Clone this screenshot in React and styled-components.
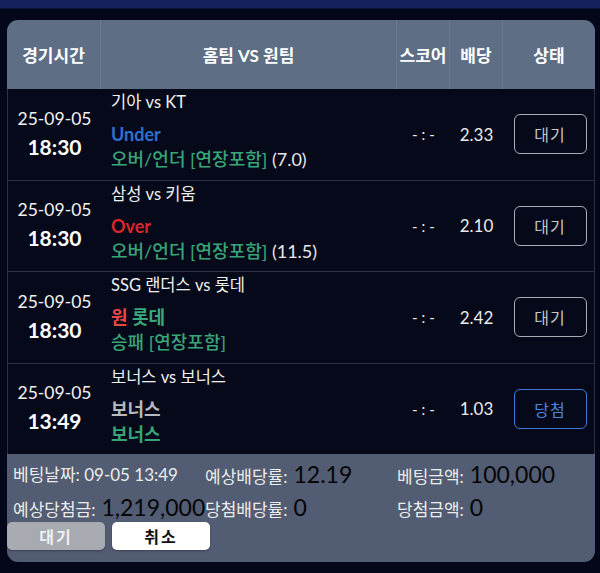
import styled, { createGlobalStyle } from "styled-components";

const GlobalStyle = createGlobalStyle`
  html, body {
    margin: 0;
    padding: 0;
    background: #04061a;
    font-family: Lato, "Noto Sans CJK KR", sans-serif;
  }
`;

const COLS = "93px 296px 53px 53px 93px";

const Page = styled.div`
  width: 600px;
  height: 573px;
  background: #04061a;
  overflow: hidden;
`;

const TopBar = styled.div`
  height: 8px;
  background: #15215c;
  border-bottom: 1px solid #0b1238;
`;

const Card = styled.div`
  margin: 11px 0 0 7px;
  width: 588px;
  border-radius: 11px;
  overflow: hidden;
`;

const HeadRow = styled.div`
  display: grid;
  grid-template-columns: ${COLS};
  height: 69px;
  background: #5e6e85;
`;

const HeadCell = styled.div`
  display: flex;
  align-items: center;
  justify-content: center;
  color: #ffffff;
  font-weight: 700;
  font-size: 17px;
  border-left: ${(p) => (p.first ? "none" : "1px solid #6a7a90")};
`;

const Row = styled.div`
  display: grid;
  grid-template-columns: ${COLS};
  height: 90.5px;
  background: #060919;
  border-top: ${(p) => (p.first ? "none" : "1px solid #2c3146")};
  border-left: 1px solid #2c3146;
  border-right: 1px solid #2c3146;
`;

const TimeCell = styled.div`
  display: flex;
  flex-direction: column;
  align-items: center;
  justify-content: center;
  gap: 3px;
  color: #f2f2f2;
`;

const DateText = styled.div`
  font-size: 17.5px;
  line-height: 24px;
  margin-top: -2px;
`;

const ClockText = styled.div`
  font-size: 21px;
  font-weight: 700;
  line-height: 26px;
  color: #ffffff;
`;

const MatchCell = styled.div`
  display: flex;
  flex-direction: column;
  padding: 1px 0 0 10px;
`;

const Teams = styled.div`
  font-size: 16.5px;
  line-height: 24px;
  color: #f0f0f0;
`;

const Pick = styled.div`
  margin-top: 7px;
  font-size: 18px;
  line-height: 26px;
  font-weight: 700;
  color: ${(p) => p.color || "#3aa97c"};
`;

const Market = styled.div`
  font-size: 18px;
  line-height: 24px;
  font-weight: ${(p) => (p.bold ? 700 : 500)};
  color: #36a678;
`;

const Plain = styled.span`
  color: #e8e8e8;
  font-weight: 400;
`;

const Red = styled.span`
  color: #e8474a;
`;

const Centered = styled.div`
  display: flex;
  align-items: center;
  justify-content: center;
  color: #ececec;
  font-size: ${(p) => p.size || 16}px;
`;

const Score = styled.span`
  letter-spacing: 4px;
  margin-right: -4px;
`;

const StatusBtn = styled.div`
  width: 71px;
  height: 38px;
  border-radius: 6px;
  border: 1px solid ${(p) => (p.win ? "#3b7ad6" : "#a9acb4")};
  color: ${(p) => (p.win ? "#4a88e0" : "#c4c6cc")};
  display: flex;
  align-items: center;
  justify-content: center;
  font-size: 16px;
  letter-spacing: 1px;
`;

const StatusCell = styled.div`
  display: flex;
  align-items: center;
  justify-content: center;
  padding-left: 1px;
`;

const Footer = styled.div`
  background: #525c72;
  padding: 3px 0 12px 0;
`;

const InfoGrid = styled.div`
  display: grid;
  grid-template-columns: 192px 192px 1fr;
  grid-auto-rows: 33px;
  align-items: center;
  padding-left: 6px;
`;

const Info = styled.div`
  display: flex;
  align-items: baseline;
  white-space: nowrap;
  font-size: 17px;
  color: #ececec;
`;

const Value = styled.span`
  margin-left: 6px;
  font-size: 23px;
  color: #050506;
`;

const Buttons = styled.div`
  display: flex;
  gap: 7px;
  margin-top: -1px;
`;

const FootBtn = styled.div`
  width: 98px;
  height: 28px;
  border-radius: 5px;
  background: ${(p) => (p.light ? "#ffffff" : "#a7aab1")};
  color: ${(p) => (p.light ? "#111111" : "#eef0f3")};
  display: flex;
  align-items: center;
  justify-content: center;
  font-size: 16px;
  font-weight: 700;
  letter-spacing: 2px;
  box-shadow: 0 1px 2px rgba(0, 0, 0, 0.3);
`;

const rows = [
  {
    date: "25-09-05",
    time: "18:30",
    teams: "기아 vs KT",
    pick: <span>Under</span>,
    pickColor: "#2f6fcf",
    market: "오버/언더 [연장포함]",
    extra: " (7.0)",
    odds: "2.33",
    status: "대기",
  },
  {
    date: "25-09-05",
    time: "18:30",
    teams: "삼성 vs 키움",
    pick: <span>Over</span>,
    pickColor: "#d8262b",
    market: "오버/언더 [연장포함]",
    extra: " (11.5)",
    odds: "2.10",
    status: "대기",
  },
  {
    date: "25-09-05",
    time: "18:30",
    teams: "SSG 랜더스 vs 롯데",
    pick: (
      <span>
        <Red>원</Red> 롯데
      </span>
    ),
    market: "승패 [연장포함]",
    odds: "2.42",
    status: "대기",
  },
  {
    date: "25-09-05",
    time: "13:49",
    teams: "보너스 vs 보너스",
    pick: <span>보너스</span>,
    pickColor: "#b9babe",
    market: "보너스",
    bold: true,
    odds: "1.03",
    status: "당첨",
    win: true,
  },
];

export default function App() {
  return (
    <Page>
      <GlobalStyle />
      <TopBar />
      <Card>
        <HeadRow>
          <HeadCell first>경기시간</HeadCell>
          <HeadCell>홈팀 VS 원팀</HeadCell>
          <HeadCell>스코어</HeadCell>
          <HeadCell>배당</HeadCell>
          <HeadCell>상태</HeadCell>
        </HeadRow>
        {rows.map((r, i) => (
          <Row key={i} first={i === 0}>
            <TimeCell>
              <DateText>{r.date}</DateText>
              <ClockText>{r.time}</ClockText>
            </TimeCell>
            <MatchCell>
              <Teams>{r.teams}</Teams>
              <Pick color={r.pickColor}>{r.pick}</Pick>
              <Market bold={r.bold}>
                {r.market}
                {r.extra && <Plain>{r.extra}</Plain>}
              </Market>
            </MatchCell>
            <Centered size={15}>
              <Score>-:-</Score>
            </Centered>
            <Centered size={17}>{r.odds}</Centered>
            <StatusCell>
              <StatusBtn win={r.win}>{r.status}</StatusBtn>
            </StatusCell>
          </Row>
        ))}
        <Footer>
          <InfoGrid>
            <Info>베팅날짜: 09-05 13:49</Info>
            <Info>
              예상배당률:<Value>12.19</Value>
            </Info>
            <Info>
              베팅금액:<Value>100,000</Value>
            </Info>
            <Info>
              예상당첨금:<Value>1,219,000</Value>
            </Info>
            <Info>
              당첨배당률:<Value>0</Value>
            </Info>
            <Info>
              당첨금액:<Value>0</Value>
            </Info>
          </InfoGrid>
          <Buttons>
            <FootBtn>대기</FootBtn>
            <FootBtn light>취소</FootBtn>
          </Buttons>
        </Footer>
      </Card>
    </Page>
  );
}
